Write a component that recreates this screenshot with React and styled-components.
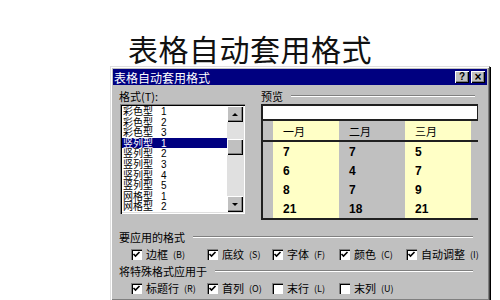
import styled, { createGlobalStyle } from "styled-components";

const GlobalStyle = createGlobalStyle`
  html, body {
    margin: 0;
    padding: 0;
    background: #ffffff;
    width: 500px;
    height: 300px;
    overflow: hidden;
  }
  body {
    font-family: "Noto Sans CJK SC", "Liberation Sans", sans-serif;
  }
`;

const Page = styled.div`
  width: 500px;
  height: 300px;
  overflow: hidden;
  display: flex;
  flex-direction: column;
`;

const Heading = styled.h1`
  margin: 0;
  padding: 30px 0 0 128px;
  height: 39px;
  font-size: 30px;
  line-height: 36px;
  font-weight: 400;
  letter-spacing: 0.5px;
  color: #111;
  font-family: "Noto Sans CJK SC", sans-serif;
`;

const Dialog = styled.div`
  margin-left: 110px;
  width: 380px;
  height: 240px;
  background: #c0c0c0;
  border: 1px solid #404040;
  border-top-color: #dfdfdf;
  border-left-color: #dfdfdf;
  box-shadow: inset 1px 1px 0 #fff, inset -1px -1px 0 #808080, 1px 1px 0 #000;
  padding: 2px;
  box-sizing: border-box;
  font-size: 11px;
  color: #000;
`;

const TitleBar = styled.div`
  height: 16px;
  background: #000080;
  display: flex;
  align-items: center;
  justify-content: space-between;
  padding: 0 2px 0 1px;
  color: #fff;
  font-size: 12px;
`;

const TitleButtons = styled.div`
  display: flex;
  gap: 2px;
`;

const TitleButton = styled.div`
  width: 14px;
  height: 12px;
  background: #c0c0c0;
  box-shadow: inset 1px 1px 0 #fff, inset -1px -1px 0 #000, inset -2px -2px 0 #808080;
  display: flex;
  align-items: center;
  justify-content: center;
  color: #000;
  font-family: "Liberation Sans", sans-serif;
  font-weight: 700;
  font-size: ${(p) => p.$size || 10}px;
  line-height: 1;
`;

const Body = styled.div`
  padding: 4px 6px 0 6px;
`;

const TopRow = styled.div`
  display: grid;
  grid-template-columns: 130px 1fr;
  gap: 12px;
`;

const Label = styled.div`
  height: 14px;
  line-height: 14px;
  font-size: 11px;
  white-space: nowrap;
`;

const GroupLabel = styled.div`
  display: flex;
  align-items: center;
  gap: 8px;
  height: 14px;
  line-height: 14px;
  font-size: 11px;
  white-space: nowrap;
  padding-right: ${(p) => p.$right || 0}px;
  &::after {
    content: "";
    flex: 1;
    height: 0;
    border-top: 1px solid #808080;
    border-bottom: 1px solid #fff;
  }
`;

const ListBox = styled.div`
  margin: 1px 0 0 1px;
  width: 125px;
  height: 110px;
  display: flex;
  background: #fff;
  box-shadow: inset 1px 1px 0 #808080, inset 2px 2px 0 #000, inset -1px -1px 0 #fff, inset -2px -2px 0 #dfdfdf;
  padding: 2px;
  box-sizing: border-box;
`;

const Items = styled.div`
  flex: 1;
  display: flex;
  flex-direction: column;
`;

const Item = styled.div`
  height: 10.6px;
  line-height: 10.6px;
  font-size: 10px;
  padding-left: 1px;
  white-space: nowrap;
  background: ${(p) => (p.$selected ? "#000080" : "transparent")};
  color: ${(p) => (p.$selected ? "#fff" : "#000")};
  span {
    margin-left: 8px;
    font-family: "Liberation Sans", sans-serif;
    font-size: 10px;
  }
`;

const ScrollBar = styled.div`
  width: 16px;
  display: flex;
  flex-direction: column;
  background: #e0e0e0;
`;

const ScrollArrow = styled.div`
  height: 16px;
  background: #c0c0c0;
  box-shadow: inset 1px 1px 0 #fff, inset -1px -1px 0 #000, inset -2px -2px 0 #808080;
  display: flex;
  align-items: center;
  justify-content: center;
  &::before {
    content: "";
    border-left: 3px solid transparent;
    border-right: 3px solid transparent;
    ${(p) => (p.$down ? "border-top: 3px solid #000;" : "border-bottom: 3px solid #000;")}
  }
`;

const Track = styled.div`
  flex: 1;
  padding-top: 17px;
`;

const Thumb = styled.div`
  height: 16px;
  background: #c0c0c0;
  box-shadow: inset 1px 1px 0 #fff, inset -1px -1px 0 #000, inset -2px -2px 0 #808080;
`;

const Preview = styled.div`
  margin-top: 1px;
  width: 217px;
  border: 2px solid #202020;
  border-right-width: 1px;
  background: #c0c0c0;
  box-sizing: border-box;
`;

const BlankRow = styled.div`
  height: 13px;
  background: #fff;
  border-bottom: 2px solid #202020;
`;

const Row = styled.div`
  display: grid;
  grid-template-columns: 10px 66px 66px 66px 1fr;
  height: ${(p) => p.$h || 19}px;
  border-bottom: ${(p) => (p.$rule ? "2px solid #202020" : "none")};
`;

const Cell = styled.div`
  background: ${(p) => (p.$yellow ? "#ffffc6" : "#c0c0c0")};
  display: flex;
  align-items: center;
  padding-left: 10px;
  font-size: ${(p) => (p.$num ? 12 : 11)}px;
  font-weight: ${(p) => (p.$num ? 700 : 400)};
  font-family: ${(p) =>
    p.$num ? '"Liberation Sans", sans-serif' : '"Noto Sans CJK SC", sans-serif'};
`;

const Section = styled.div`
  margin-top: ${(p) => p.$top || 0}px;
`;

const CheckRow = styled.div`
  display: grid;
  grid-template-columns: 76px 65px 67px 67px auto;
  padding-left: 12px;
  height: 20px;
  align-items: center;
`;

const Check = styled.label`
  display: flex;
  align-items: center;
  gap: 4px;
  white-space: nowrap;
  font-size: 11px;
`;

const Box = styled.span`
  width: 11px;
  height: 11px;
  background: #fff;
  box-shadow: inset 1px 1px 0 #808080, inset 2px 2px 0 #000;
  display: flex;
  align-items: center;
  justify-content: center;
`;

const Key = styled.span`
  font-size: 9px;
  margin-left: 1px;
`;

const CheckItem = ({ label, k, on }) => (
  <Check>
    <Box>
      {on && (
        <svg width="9" height="9" viewBox="0 0 9 9">
          <path d="M1.5 4 L3.5 6 L7.5 2" stroke="#000" strokeWidth="1.6" fill="none" />
        </svg>
      )}
    </Box>
    {label}
    <Key>({k})</Key>
  </Check>
);

const items = [
  ["彩色型", "1"],
  ["彩色型", "2"],
  ["彩色型", "3"],
  ["竖列型", "1"],
  ["竖列型", "2"],
  ["竖列型", "3"],
  ["竖列型", "4"],
  ["竖列型", "5"],
  ["网格型", "1"],
  ["网格型", "2"],
];

const data = [
  ["7", "7", "5"],
  ["6", "4", "7"],
  ["8", "7", "9"],
  ["21", "18", "21"],
];

const PreviewRow = ({ values, num, rule, h }) => (
  <Row $rule={rule} $h={h}>
    <Cell />
    <Cell $yellow $num={num}>{values[0]}</Cell>
    <Cell $num={num}>{values[1]}</Cell>
    <Cell $yellow $num={num}>{values[2]}</Cell>
    <Cell />
  </Row>
);

export default function App() {
  return (
    <Page>
      <GlobalStyle />
      <Heading>表格自动套用格式</Heading>
      <Dialog>
        <TitleBar>
          <span>表格自动套用格式</span>
          <TitleButtons>
            <TitleButton>?</TitleButton>
            <TitleButton $size={12}>×</TitleButton>
          </TitleButtons>
        </TitleBar>
        <Body>
          <TopRow>
            <div>
              <Label>格式(T):</Label>
              <ListBox>
                <Items>
                  {items.map(([t, n], i) => (
                    <Item key={i} $selected={i === 3}>
                      {t}
                      <span>{n}</span>
                    </Item>
                  ))}
                </Items>
                <ScrollBar>
                  <ScrollArrow />
                  <Track>
                    <Thumb />
                  </Track>
                  <ScrollArrow $down />
                </ScrollBar>
              </ListBox>
            </div>
            <div>
              <GroupLabel $right={6}>预览</GroupLabel>
              <Preview>
                <BlankRow />
                <PreviewRow values={["一月", "二月", "三月"]} rule h={19} />
                {data.map((r, i) => (
                  <PreviewRow key={i} values={r} num h={19} />
                ))}
              </Preview>
            </div>
          </TopRow>
          <Section $top={10}>
            <GroupLabel $right={8}>要应用的格式</GroupLabel>
            <CheckRow>
              <CheckItem label="边框" k="B" on />
              <CheckItem label="底纹" k="S" on />
              <CheckItem label="字体" k="F" on />
              <CheckItem label="颜色" k="C" on />
              <CheckItem label="自动调整" k="I" on />
            </CheckRow>
            <GroupLabel $right={8}>将特殊格式应用于</GroupLabel>
            <CheckRow>
              <CheckItem label="标题行" k="R" on />
              <CheckItem label="首列" k="O" on />
              <CheckItem label="末行" k="L" />
              <CheckItem label="末列" k="U" />
            </CheckRow>
          </Section>
        </Body>
      </Dialog>
    </Page>
  );
}
